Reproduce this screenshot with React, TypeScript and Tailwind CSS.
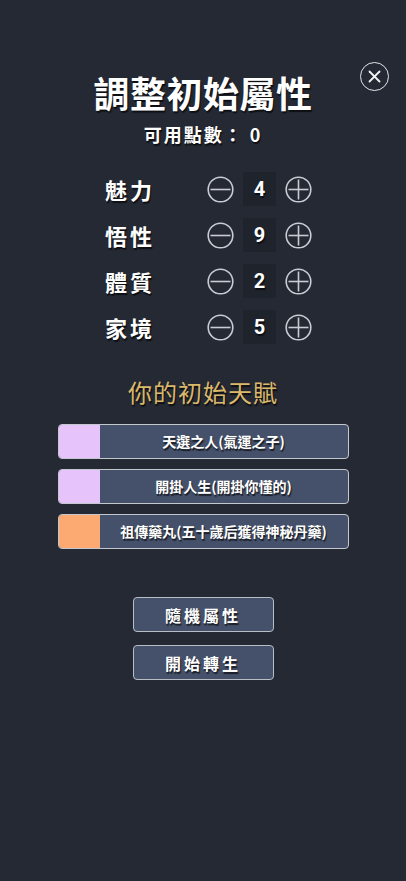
import React from "react"

const attrs = [
  { name: "魅力", value: 4 },
  { name: "悟性", value: 9 },
  { name: "體質", value: 2 },
  { name: "家境", value: 5 },
]

const talents = [
  { label: "天選之人(氣運之子)", color: "bg-[#e6c3fb]" },
  { label: "開掛人生(開掛你懂的)", color: "bg-[#e6c3fb]" },
  { label: "祖傳藥丸(五十歲后獲得神秘丹藥)", color: "bg-[#fcaa72]" },
]

function CircleIcon({ plus }: { plus?: boolean }) {
  return (
    <svg width="27" height="27" viewBox="0 0 27 27" fill="none" stroke="#c9ccd2" strokeWidth="1.6">
      <circle cx="13.5" cy="13.5" r="12.3" />
      <line x1="3.5" y1="13.5" x2="23.5" y2="13.5" />
      {plus && <line x1="13.5" y1="3.5" x2="13.5" y2="23.5" />}
    </svg>
  )
}

export default function App() {
  const shadow = "[text-shadow:1px_2px_1px_rgba(0,0,0,0.65)]"
  return (
    <div
      className="relative min-h-[881px] w-full bg-[#252934] text-white"
      style={{ fontFamily: '"Noto Sans CJK TC", "Noto Sans CJK SC", Roboto, sans-serif' }}
    >
      <button className="absolute left-[360px] top-[62px] flex h-[29px] w-[29px] items-center justify-center rounded-full border-[1.5px] border-[#e4e6ea]">
        <svg width="13" height="13" viewBox="0 0 13 13" stroke="#f2f3f5" strokeWidth="1.8" strokeLinecap="round">
          <line x1="1.5" y1="1.5" x2="11.5" y2="11.5" />
          <line x1="11.5" y1="1.5" x2="1.5" y2="11.5" />
        </svg>
      </button>

      <div className="flex flex-col items-center pt-[70px]">
        <h1 className={`text-[36px] font-bold leading-[44px] tracking-[0.5px] ${shadow}`}>調整初始屬性</h1>
        <p className={`mt-[7px] text-[18px] font-bold leading-[26px] tracking-[2px] ${shadow}`}>
          可用點數： 0
        </p>
      </div>

      <div className="ml-[105px] mt-[25px] flex flex-col gap-[12px]">
        {attrs.map((a) => (
          <div key={a.name} className="flex h-[34px] items-center">
            <span className={`w-[102px] text-[22px] font-bold leading-none tracking-[3px] ${shadow}`}>{a.name}</span>
            <CircleIcon />
            <div className="ml-[9px] flex h-[34px] w-[33px] items-center justify-center bg-[#1f232c]">
              <span className={`text-[20px] font-bold ${shadow}`} style={{ fontFamily: "Roboto, sans-serif" }}>
                {a.value}
              </span>
            </div>
            <div className="ml-[9px]">
              <CircleIcon plus />
            </div>
          </div>
        ))}
      </div>

      <div className="flex flex-col items-center">
        <h2 className={`mt-[31px] text-[24px] leading-[34px] tracking-[1px] text-[#dbb86a] ${shadow}`}>你的初始天賦</h2>
        <div className="mt-[15px] flex flex-col gap-[10px]">
          {talents.map((t) => (
            <div
              key={t.label}
              className="flex h-[35px] w-[291px] overflow-hidden rounded-[4px] border-[1.5px] border-[#c3c7ce] bg-[#45516a]"
            >
              <div className={`w-[41px] ${t.color}`} />
              <div className={`flex flex-1 items-center justify-center text-[14px] font-bold ${shadow}`}>{t.label}</div>
            </div>
          ))}
        </div>

        <div className="mt-[48px] flex flex-col gap-[13px]">
          {["隨機屬性", "開始轉生"].map((b) => (
            <button
              key={b}
              className={`h-[35px] w-[141px] rounded-[4px] border-[1.5px] border-[#b9bec6] bg-[#45516a] text-[16px] font-bold tracking-[3px] text-white ${shadow}`}
            >
              {b}
            </button>
          ))}
        </div>
      </div>
    </div>
  )
}
